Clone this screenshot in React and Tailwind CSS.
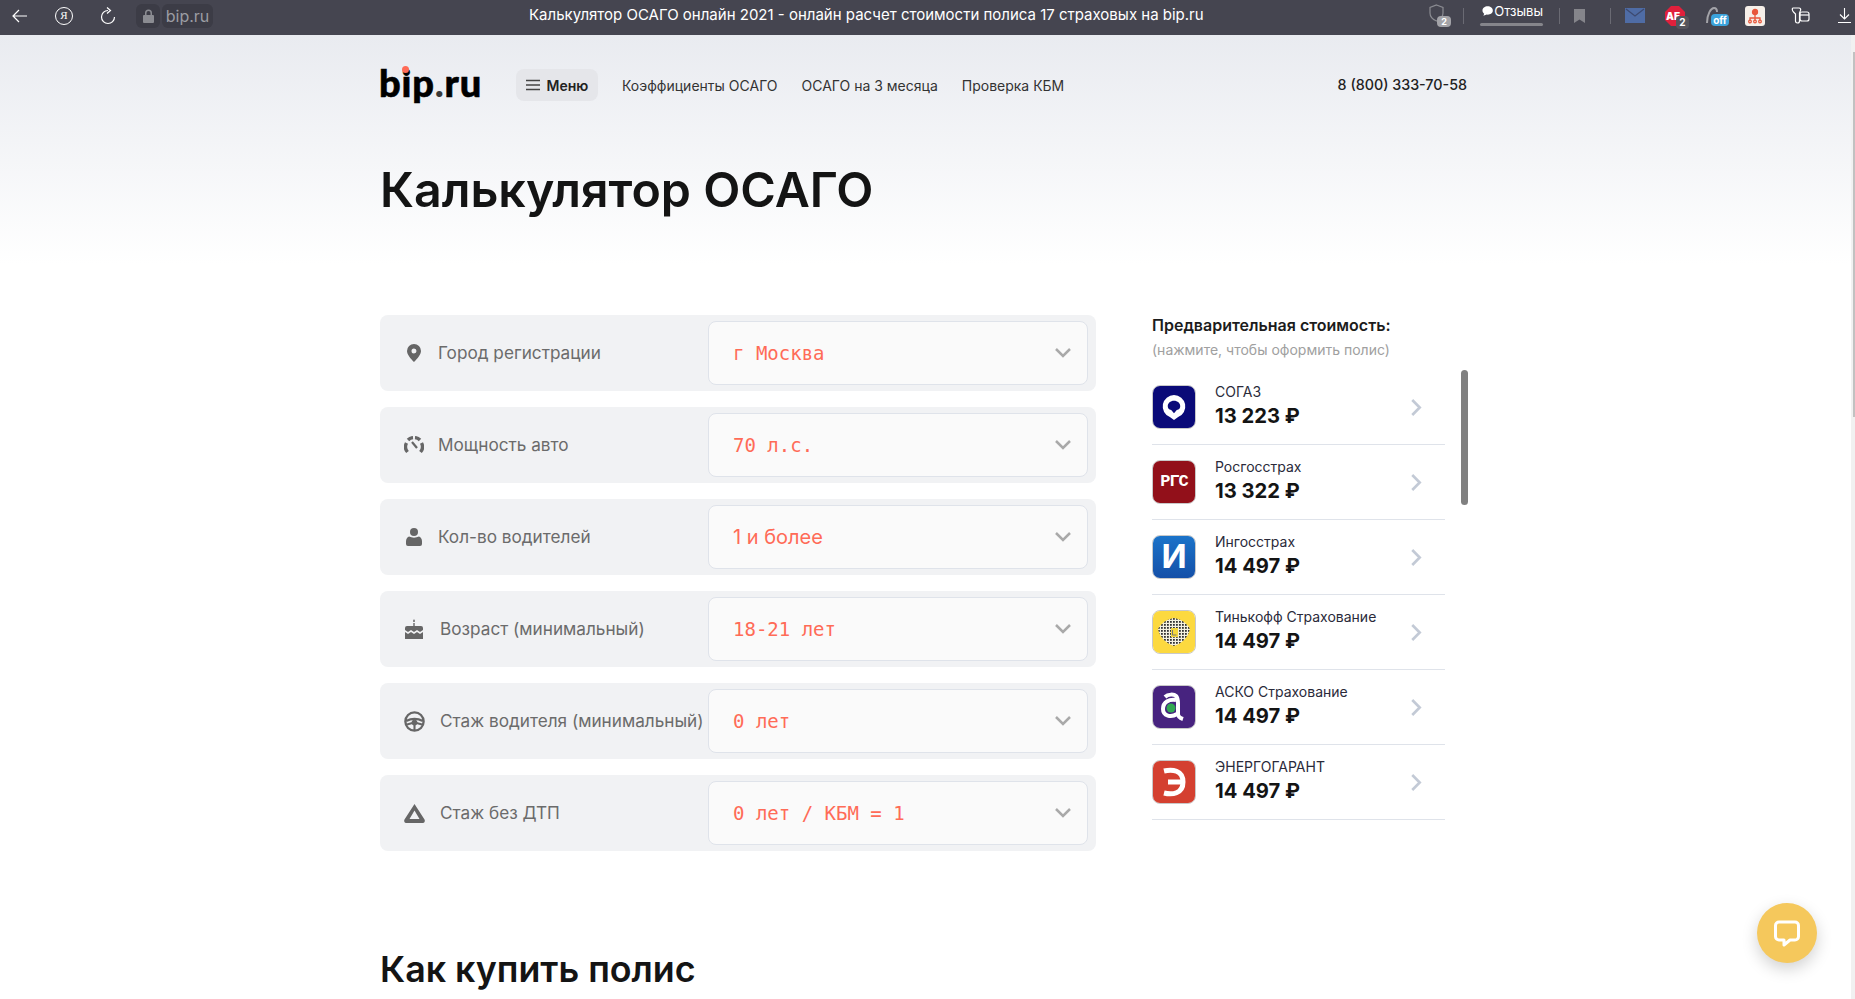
import React from 'react';

const rows = [
    { icon: PinIcon, label: 'Город регистрации', value: 'г Москва', mono: true },
    { icon: GaugeIcon, label: 'Мощность авто', value: '70 л.с.', mono: true },
    { icon: PersonIcon, label: 'Кол-во водителей', value: '1 и более' },
    { icon: CakeIcon, label: 'Возраст (минимальный)', value: '18-21 лет', mono: true, wide: true },
    { icon: WheelIcon, label: 'Стаж водителя (минимальный)', value: '0 лет', mono: true, wide: true },
    { icon: TriangleIcon, label: 'Стаж без ДТП', value: '0 лет / КБМ = 1', mono: true, wide: true },
];

const offers = [
    { logo: SogazLogo, name: 'СОГАЗ', price: '13 223 ₽' },
    { logo: RgsLogo, name: 'Росгосстрах', price: '13 322 ₽' },
    { logo: IngosLogo, name: 'Ингосстрах', price: '14 497 ₽' },
    { logo: TinkoffLogo, name: 'Тинькофф Страхование', price: '14 497 ₽' },
    { logo: AskoLogo, name: 'АСКО Страхование', price: '14 497 ₽' },
    { logo: EnergoLogo, name: 'ЭНЕРГОГАРАНТ', price: '14 497 ₽' },
];

export default function App() {
    return (
        <div className="h-[999px] w-full overflow-hidden flex flex-col font-['Inter',sans-serif] bg-white">
            <BrowserBar />
            <div className="flex flex-1 min-h-0">
                <div className="flex-1 min-w-0 relative">
                    <div className="h-[230px] bg-gradient-to-b from-[#e9ebf0] to-white">
                        <div className="w-[1087px] ml-[380px] pt-[33px]">
                            <Header />
                            <h1 className="mt-[58px] text-[48.300px] leading-[60px] font-semibold text-[#141414]">Калькулятор ОСАГО</h1>
                        </div>
                    </div>
                    <div className="w-[1087px] ml-[380px] mt-[50px] flex">
                        <div className="w-[716px] flex flex-col gap-4">
                            {rows.map((r) => <FormRow key={r.label} {...r} />)}
                        </div>
                        <Sidebar />
                    </div>
                    <h2 className="ml-[380px] mt-[96px] text-[35.800px] leading-[44px] font-semibold text-[#141414]">Как купить полис</h2>
                    <button className="absolute left-[1757px] top-[868px] w-[60px] h-[60px] rounded-full bg-[#f5c85c] shadow-[0_6px_16px_rgba(0,0,0,0.18)] flex items-center justify-center">
                        <svg width="28" height="28" viewBox="0 0 28 28" fill="none">
                            <path d="M6 3h16a3.500 3.500 0 0 1 3.500 3.500v11a3.500 3.500 0 0 1-3.500 3.500h-5l-6 5v-5H6a3.500 3.500 0 0 1-3.500-3.500v-11A3.500 3.500 0 0 1 6 3z" stroke="#fff" strokeWidth="3" strokeLinejoin="round" />
                        </svg>
                    </button>
                </div>
                <div className="w-[4px] bg-[#f1f1f1] pt-[17px] flex justify-end">
                    <div className="w-[2px] h-[365px] bg-[#c1c1c1]" />
                </div>
            </div>
        </div>
    );
}

function BrowserBar() {
    return (
        <div className="h-[35px] shrink-0 bg-[#454550] flex items-center pb-[4px] text-white relative">
            <svg className="ml-[12px]" width="16" height="14" viewBox="0 0 16 14" fill="none" stroke="#fff" strokeWidth="1.200"><path d="M15 7H1M7 1 1 7l6 6" /></svg>
            <div className="ml-[27px] w-[18px] h-[18px] rounded-full border border-white flex items-center justify-center text-[11px] leading-none font-['Liberation_Serif',serif]">Я</div>
            <svg className="ml-[27px]" width="16" height="18" viewBox="0 0 16 18" fill="none" stroke="#fff" strokeWidth="1.200"><path d="M8 3.500a6.500 6.500 0 1 0 6.500 6.500M7 .5l3.500 3L7 6.500" /></svg>
            <div className="ml-[20px] w-[24px] h-[24px] rounded-md bg-[#3c3c46] flex items-center justify-center">
                <svg width="11" height="14" viewBox="0 0 11 14" fill="#8b8c92"><path d="M2 6V4a3.500 3.500 0 0 1 7 0v2h1a1 1 0 0 1 1 1v6a1 1 0 0 1-1 1H1a1 1 0 0 1-1-1V7a1 1 0 0 1 1-1zm1.500 0h4V4a2 2 0 0 0-4 0z" /></svg>
            </div>
            <div className="ml-[2px] h-[24px] w-[51px] rounded-md bg-[#3c3c46] flex items-center justify-center text-[16px] text-[#9b9ca3]">bip.ru</div>
            <div className="ml-[316px] text-[15px] whitespace-nowrap">Калькулятор ОСАГО онлайн 2021 - онлайн расчет стоимости полиса 17 страховых на bip.ru</div>
            <BarIcons />
        </div>
    );
}

function BarIcons() {
    return (
        <div className="ml-auto mr-[4px] flex items-center h-full">
            <div className="relative w-[22px] h-[24px]">
                <svg width="15" height="18" viewBox="0 0 15 18" fill="none" stroke="#8b8c92" strokeWidth="1.200"><path d="M7.500 1 14 3.500V9c0 3.500-3 6.500-6.500 8C4 15.500 1 12.500 1 9V3.500z" /></svg>
                <span className="absolute right-0 bottom-[1px] w-[14px] h-[11px] rounded-sm bg-[#a3a3a8] text-[9px] leading-[11px] font-bold text-center">2</span>
            </div>
            <div className="ml-[12px] w-px h-[16px] bg-[#6a6a73]" />
            <div className="ml-[16px] w-[63px] h-[24px] flex flex-col">
                <div className="flex items-center gap-[1px] pl-[2px] mt-[-1px] text-[13px] leading-[16px] whitespace-nowrap">
                    <svg width="13" height="12" viewBox="0 0 12 12" fill="#fff"><path d="M6 1C3 1 .5 2.800.5 5.500c0 1.400.7 2.500 1.800 3.300L1.500 11 5 9.800c.3 0 .7.100 1 .100 3 0 5.500-1.800 5.500-4.400S9 1 6 1z" /></svg>
                    <span>Отзывы</span>
                </div>
                <div className="mt-[4px] h-[3px] rounded-sm bg-[#85858b]" />
            </div>
            <div className="ml-[16px] w-px h-[16px] bg-[#6a6a73]" />
            <svg className="ml-[14px]" width="11" height="14" viewBox="0 0 11 14" fill="#85858b"><path d="M0 0h11v14L5.500 10.500 0 14z" /></svg>
            <div className="ml-[25px] w-px h-[16px] bg-[#6a6a73]" />
            <svg className="ml-[14px]" width="20" height="15" viewBox="0 0 20 15"><path d="M0 0h20v15H0z" fill="#4f6ca5" /><path d="M1 1l9 7 9-7" fill="none" stroke="#3d4a70" strokeWidth="1.300" /></svg>
            <div className="ml-[20px] relative w-[24px] h-[20px]">
                <svg className="absolute left-0 top-0" width="20" height="20" viewBox="0 0 20 20"><path d="M6 0h8l6 6v8l-6 6H6l-6-6V6z" fill="#e0203c" /></svg>
                <span className="absolute left-[1px] top-[3px] text-[10px] leading-[14px] font-black">AE</span>
                <span className="absolute right-0 bottom-[-3px] w-[13px] h-[13px] rounded-sm bg-[#55555c] text-[10px] leading-[13px] font-bold text-center">2</span>
            </div>
            <div className="ml-[16px] relative w-[24px] h-[20px]">
                <svg width="14" height="18" viewBox="0 0 14 18" fill="none" stroke="#a3a3a8" strokeWidth="2"><path d="M2 17C2 8 6 2 9 2c2 0 3 2 3 4" /></svg>
                <span className="absolute right-0 bottom-0 w-[18px] h-[12px] rounded-sm bg-[#3ba3dc] text-[10px] leading-[12px] font-bold text-center">off</span>
            </div>
            <div className="ml-[16px] w-[20px] h-[20px] rounded-[3px] bg-[#f6efe9] flex items-center justify-center">
                <svg width="16" height="16" viewBox="0 0 16 16" fill="none" stroke="#e8573c" strokeWidth="1.300"><circle cx="8" cy="4" r="2.500" fill="#e8573c" /><path d="M8 6.500V10M3 12v-2h10v2M8 10v2" /><circle cx="3" cy="13.500" r="1.300" /><circle cx="8" cy="13.500" r="1.300" /><circle cx="13" cy="13.500" r="1.300" /></svg>
            </div>
            <svg className="ml-[26px]" width="19" height="17" viewBox="0 0 19 17" fill="none" stroke="#fff" strokeWidth="1.200"><path d="M2 1h6c1.500 0 2 1 1.500 2.500L8.500 6v8c0 1-.6 2-2 2s-2-1-2-2V7L2.500 5C1 3.500 1 1 2 1z" /><rect x="9" y="5" width="9" height="9" rx="2" /><path d="M9 8h9" /></svg>
            <svg className="ml-[28px]" width="13" height="15" viewBox="0 0 13 15" fill="none" stroke="#fff" strokeWidth="1.100"><path d="M6.500 0v11M2 6.500l4.500 4.500L11 6.500M0 14.500h13" /></svg>
        </div>
    );
}

function Header() {
    return (
        <div className="flex items-center h-[34px]">
            <div className="relative w-[136px] ml-[-1px] mr-[1px] pb-[6px] text-[38px] leading-[34px] font-black font-['Lato',sans-serif] text-black tracking-[0.8px] [-webkit-text-stroke:0.6px_black]">
                bip<span className="text-[#3a3a3a] [-webkit-text-stroke:0px]">.</span>ru
                <span className="absolute left-[23px] top-[1px] w-[7px] h-[7px] rounded-full bg-[#ff6b57]" />
            </div>
            <div className="h-[32px] w-[82px] rounded-lg bg-[#e5e6ea] flex items-center justify-center gap-[7px] text-[14px] font-semibold text-[#222]">
                <svg width="14" height="12" viewBox="0 0 14 12" stroke="#444" strokeWidth="1.500"><path d="M0 1.500h14M0 6h14M0 10.500h14" /></svg>
                Меню
            </div>
            <div className="ml-[24px] text-[14px] text-[#333] whitespace-nowrap">Коэффициенты ОСАГО</div>
            <div className="ml-[24px] text-[14px] text-[#333] whitespace-nowrap">ОСАГО на 3 месяца</div>
            <div className="ml-[24px] text-[14px] text-[#333] whitespace-nowrap">Проверка КБМ</div>
            <div className="ml-auto text-[14.300px] font-medium text-[#222]">8 (800) 333-70-58</div>
        </div>
    );
}

function FormRow({ icon: Icon, label, value, mono, wide }) {
    return (
        <div className="h-[76px] rounded-lg bg-[#f1f2f4] flex items-center pl-[22px] pr-[8px]">
            <div className="w-[24px] flex justify-center shrink-0"><Icon /></div>
            <div className={`${wide ? 'ml-[14px]' : 'ml-[12px]'} flex-1 text-[17.200px] text-[#6b6b6b] whitespace-nowrap`}>{label}</div>
            <div className="w-[380px] h-[64px] shrink-0 rounded-lg bg-[#fafafa] border border-[#dfe3ea] flex items-center pl-[24px] pr-[16px]">
                <span className={`flex-1 text-[#ff6b57] ${mono ? "text-[19px] font-['DejaVu_Sans_Mono',monospace]" : 'text-[20px]'}`}>{value}</span>
                <svg width="16" height="10" viewBox="0 0 16 10" fill="none" stroke="#a9a9a9" strokeWidth="2.500"><path d="M1 1l7 7 7-7" /></svg>
            </div>
        </div>
    );
}

function Sidebar() {
    return (
        <div className="ml-[56px] flex-1 relative">
            <div className="text-[16px] leading-[20px] font-semibold text-[#1c1c1c]">Предварительная стоимость:</div>
            <div className="mt-[5px] text-[14px] leading-[20px] text-[#a0a0a0]">(нажмите, чтобы оформить полис)</div>
            <div className="mt-[10px] w-[293px]">
                {offers.map((o) => <OfferRow key={o.name} {...o} />)}
            </div>
            <div className="absolute left-[309px] top-[55px] w-[7px] h-[135px] rounded-full bg-[#808080]" />
        </div>
    );
}

function OfferRow({ logo: Logo, name, price }) {
    return (
        <div className="h-[75px] border-b border-[#dfe3ea] flex items-center">
            <div className="w-[44px] h-[44px] rounded-lg overflow-hidden border border-[#c9c9c9] shrink-0 flex items-center justify-center"><Logo /></div>
            <div className="ml-[19px] flex-1 pb-[2px]">
                <div className="mb-[2px] text-[14px] leading-[18px] text-[#2a2a3a] whitespace-nowrap">{name}</div>
                <div className="text-[20.200px] leading-[26px] font-bold text-[#141414]">{price}</div>
            </div>
            <svg className="mr-[23px]" width="11" height="17" viewBox="0 0 10 16" fill="none" stroke="#c3cad6" strokeWidth="2.500"><path d="M1 1l7 7-7 7" /></svg>
        </div>
    );
}

function SogazLogo() {
    return (
        <div className="w-full h-full bg-[#0a0a78] flex items-center justify-center">
            <svg width="26" height="27" viewBox="0 0 24 26"><path d="M12 1a11 11 0 0 1 4 21.200L12 25l-4-2.800A11 11 0 0 1 12 1z" fill="#fff" /><path d="M12 6.500c3.500 0 6 2.400 6 5.200 0 1.800-1 3.300-3.300 3.800L12 18.500l-2.700-3C7 15 6 13.500 6 11.700c0-2.800 2.500-5.200 6-5.200z" fill="#0a0a78" /></svg>
        </div>
    );
}

function RgsLogo() {
    return <div className="w-full h-full bg-[#92101a] flex items-center justify-center text-white text-[17px] font-black font-['Liberation_Mono',monospace] tracking-[-1px]">РГС</div>;
}

function IngosLogo() {
    return <div className="w-full h-full bg-gradient-to-b from-[#1b73c9] to-[#1550a8] flex items-center justify-center text-white text-[33px] font-bold">И</div>;
}

function TinkoffLogo() {
    return (
        <div className="w-full h-full bg-[#fcd93f] flex items-center justify-center">
            <svg width="32" height="28" viewBox="0 0 32 28">
                <defs>
                    <pattern id="speck" width="3" height="3" patternUnits="userSpaceOnUse">
                        <rect width="3" height="3" fill="#f4f0e0" />
                        <rect width="1.800" height="1.800" fill="#333" />
                    </pattern>
                </defs>
                <path d="M16 0c6 1 12 4 16 11-2 9-9 15-16 17C9 26 2 20 0 11 4 4 10 1 16 0z" fill="url(#speck)" />
                <path d="M13 10h7v9h-7z" fill="#f5d63c" />
                <path d="M14.500 12v5h4" stroke="#777" fill="none" />
            </svg>
        </div>
    );
}

function AskoLogo() {
    return (
        <div className="w-full h-full bg-[#47237f] flex items-center justify-center">
            <svg width="30" height="32" viewBox="0 0 30 32" fill="none">
                <path d="M6 6c3-3 9-3 11-1s2 5 2 8v10c0 3 2 4 5 5" stroke="#fff" strokeWidth="4" />
                <path d="M17 9c-7-1-13 2-13 9s8 9 14 5" stroke="#fff" strokeWidth="4" />
                <circle cx="12" cy="17" r="4.500" fill="#32a852" />
            </svg>
        </div>
    );
}

function EnergoLogo() {
    return (
        <div className="w-full h-full bg-[#d44030] flex items-center justify-center">
            <svg width="24" height="30" viewBox="0 0 24 30" fill="none" stroke="#fff" strokeWidth="5"><path d="M2 4c8-2 19-1 19 11S10 28 2 26M6 15h14" /></svg>
        </div>
    );
}

function PinIcon() {
    return <svg width="14" height="18" viewBox="0 0 14 18"><path fillRule="evenodd" d="M7 0a7 7 0 0 1 7 7c0 3.500-3.500 7.500-7 11C3.500 14.500 0 10.500 0 7a7 7 0 0 1 7-7zm0 4.500a2.500 2.500 0 1 0 0 5 2.500 2.500 0 0 0 0-5z" fill="#666" /></svg>;
}

function GaugeIcon() {
    return (
        <svg width="20" height="18" viewBox="0 0 20 18" fill="none" stroke="#666" strokeWidth="3.400">
            <path d="M3.500 16A8 8 0 0 1 2.500 7" />
            <path d="M4 4a8 8 0 0 1 5-2.400M11 1.600A8 8 0 0 1 16 4" />
            <path d="M17.500 7a8 8 0 0 1-1 9" />
            <path d="M8 6l5 6" strokeWidth="2.200" />
        </svg>
    );
}

function PersonIcon() {
    return <svg width="16" height="18" viewBox="0 0 16 18" fill="#666"><circle cx="8" cy="4" r="4" /><path d="M3 8.500c3 1.500 7 1.500 10 0 2 1 3 2.500 3 5V16a2 2 0 0 1-2 2H2a2 2 0 0 1-2-2v-2.500c0-2.500 1-4 3-5z" /></svg>;
}

function CakeIcon() {
    return <svg width="18" height="20" viewBox="0 0 18 20" fill="#666"><path d="M9 0l1 2a1 1 0 0 1-2 0zM8.300 4h1.400v3H8.300z" /><path d="M2 7h14a2 2 0 0 1 2 2v2l-3 2-3-2-3 2-3-2-3 2-3-2V9a2 2 0 0 1 2-2z" /><path d="M0 13l3 2 3-2 3 2 3-2 3 2 3-2v7H0z" /></svg>;
}

function WheelIcon() {
    return (
        <svg width="21" height="21" viewBox="0 0 20 20" fill="none" stroke="#666">
            <circle cx="10" cy="10" r="8.700" strokeWidth="2.200" />
            <path d="M2 9.500c5-2.500 11-2.500 16 0" strokeWidth="2.200" />
            <circle cx="10" cy="11" r="2.200" fill="#666" />
            <path d="M10 13v5M8 11.500l-6 1.500M12 11.500l6 1.500" strokeWidth="2" />
        </svg>
    );
}

function TriangleIcon() {
    return <svg width="21" height="19" viewBox="0 0 21 19"><path fillRule="evenodd" d="M10.500 0l10 15.500c.6 1 .5 3.500-1.500 3.500H2c-2 0-2.100-2.500-1.500-3.500zm0 6.500L5.500 15h10z" fill="#666" /></svg>;
}
